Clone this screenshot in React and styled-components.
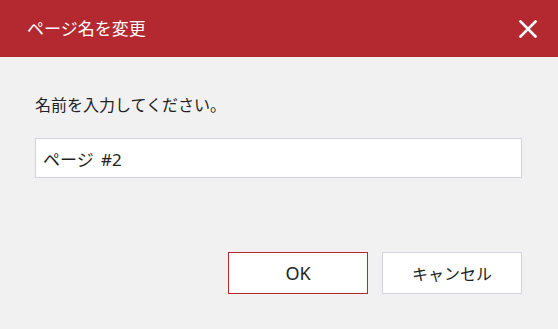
import React, { useState } from 'react';
import styled, { createGlobalStyle } from 'styled-components';

const GlobalStyle = createGlobalStyle`
  html, body {
    margin: 0;
    padding: 0;
    background: #f1f1f1;
  }
  body {
    font-family: "Noto Sans", "Noto Sans CJK JP", "Liberation Sans", sans-serif;
  }
`;

const Dialog = styled.section`
  width: 558px;
  height: 329px;
  background: #f1f1f1;
  display: flex;
  flex-direction: column;
`;

const Header = styled.header`
  height: 57px;
  flex: none;
  background: #b3292f;
  display: flex;
  align-items: center;
  justify-content: space-between;
  padding: 0 21px 0 27px;
  box-sizing: border-box;
`;

const Title = styled.h1`
  margin: 0;
  font-size: 17px;
  font-weight: 400;
  color: #fff;
  line-height: 1;
  padding-bottom: 1px;
`;

const CloseButton = styled.button`
  width: 18px;
  height: 18px;
  padding: 0;
  border: none;
  background: transparent;
  cursor: pointer;
  display: flex;
  margin-top: 1px;
`;

const Body = styled.div`
  padding: 36px 36px 0 35px;
  display: flex;
  flex-direction: column;
`;

const Label = styled.label`
  font-size: 16px;
  line-height: 24px;
  color: #222;
`;

const NameInput = styled.input`
  margin-top: 21px;
  height: 40px;
  box-sizing: border-box;
  border: 1px solid #d3d3dc;
  background: #fff;
  padding: 0 7px;
  font-family: inherit;
  font-size: 17px;
  word-spacing: 3px;
  color: #222;
  outline: none;
`;

const Footer = styled.footer`
  display: flex;
  justify-content: flex-end;
  gap: 14px;
  padding: 74px 36px 0 0;
`;

const Button = styled.button`
  width: 140px;
  height: 42px;
  box-sizing: border-box;
  background: #fff;
  border: 1px solid ${p => (p.$primary ? '#b3292f' : '#d3d3dc')};
  font-family: inherit;
  font-size: ${p => (p.$primary ? '18px' : '16px')};
  color: #222;
  cursor: pointer;
`;

export default function App() {
    const [name, setName] = useState('ページ #2');

    return (
        <>
            <GlobalStyle />
            <Dialog>
                <Header>
                    <Title>ページ名を変更</Title>
                    <CloseButton aria-label="閉じる">
                        <svg width="18" height="18" viewBox="0 0 18 18">
                            <path d="M1.5 1.5 L16.5 16.5 M16.5 1.5 L1.5 16.5" stroke="#fff" strokeWidth="2.6" strokeLinecap="square" fill="none" />
                        </svg>
                    </CloseButton>
                </Header>
                <Body>
                    <Label htmlFor="page-name">名前を入力してください。</Label>
                    <NameInput id="page-name" value={name} onChange={e => setName(e.target.value)} />
                </Body>
                <Footer>
                    <Button $primary>OK</Button>
                    <Button>キャンセル</Button>
                </Footer>
            </Dialog>
        </>
    );
}
